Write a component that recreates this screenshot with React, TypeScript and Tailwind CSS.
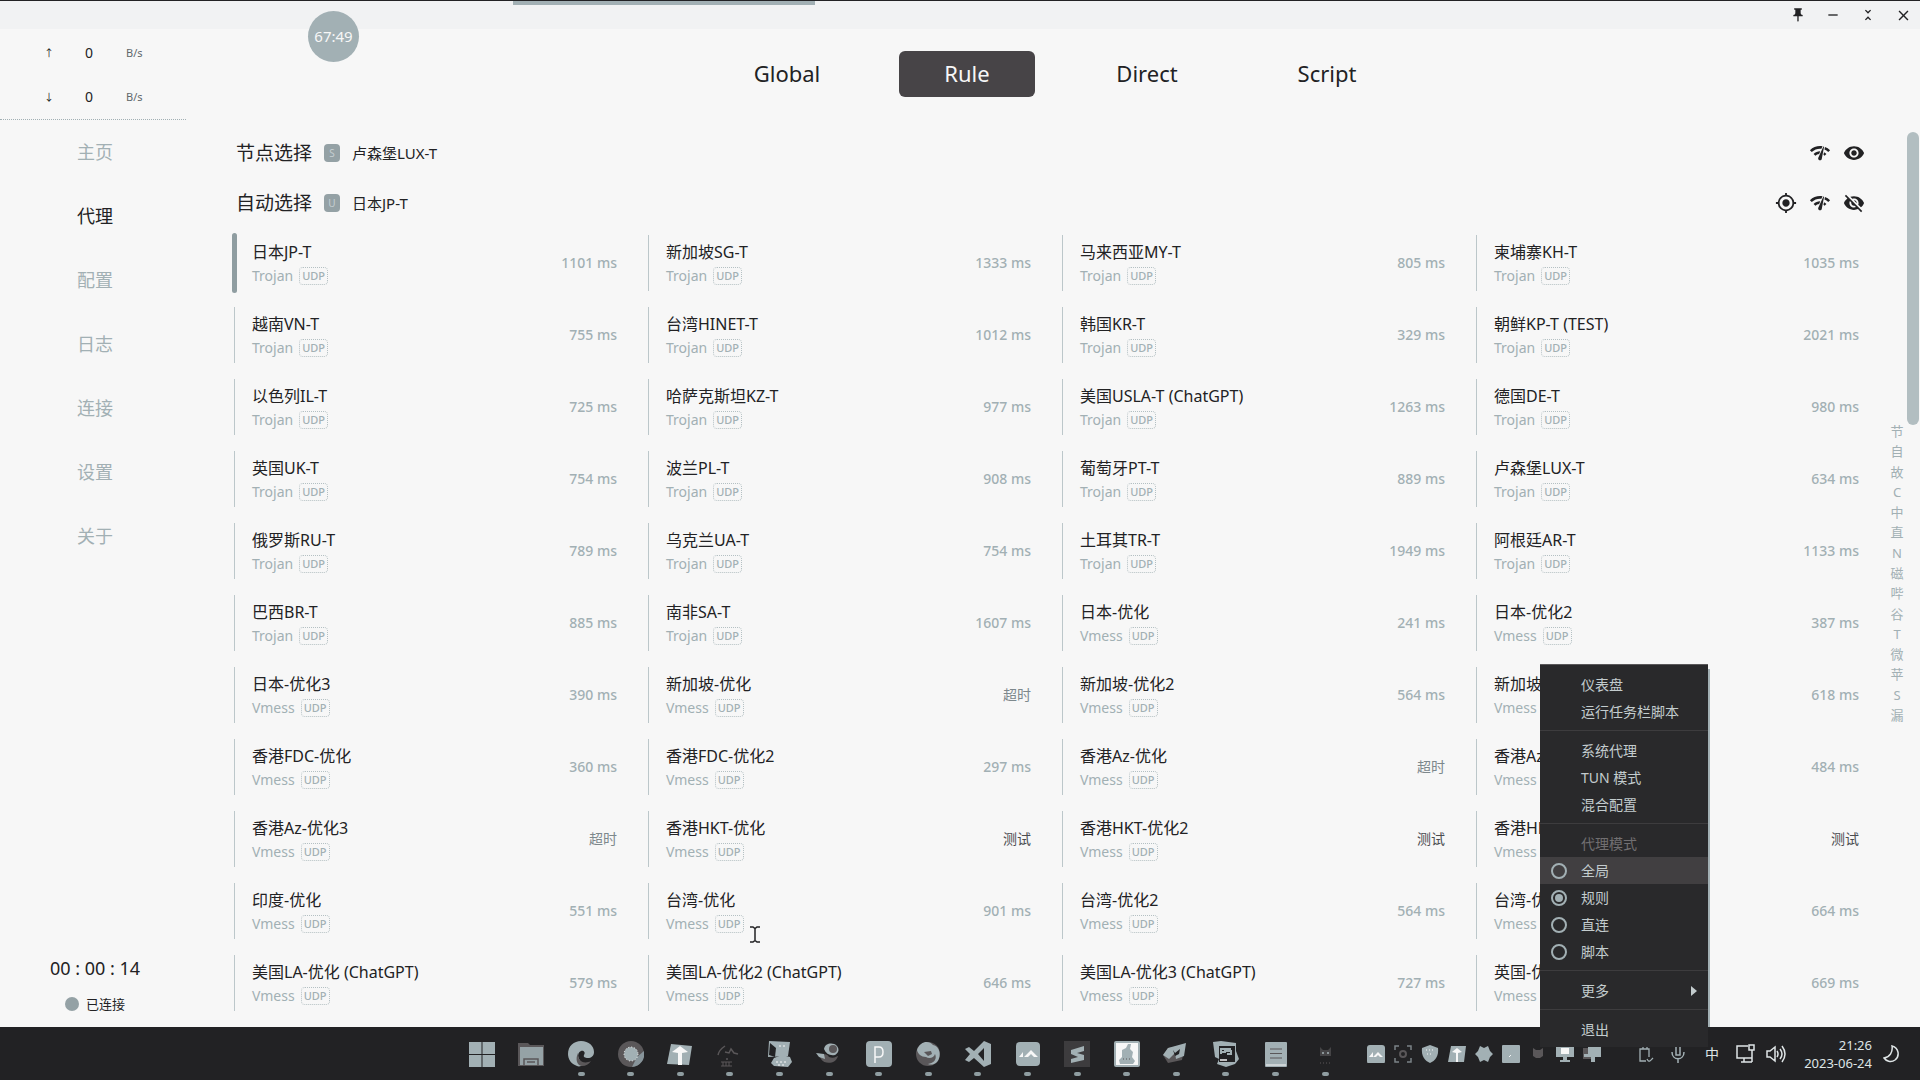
import React from "react";
import { MdClose, MdMyLocation, MdNetworkCheck, MdPushPin, MdRemove, MdUnfoldLess, MdVisibility, MdVisibilityOff } from "react-icons/md";

type Node = { name: string; protocol: "Trojan" | "Vmess"; delay: string };

const rows: [string, string][][] = [
  [["日本JP-T", "1101 ms"], ["新加坡SG-T", "1333 ms"], ["马来西亚MY-T", "805 ms"], ["柬埔寨KH-T", "1035 ms"]],
  [["越南VN-T", "755 ms"], ["台湾HINET-T", "1012 ms"], ["韩国KR-T", "329 ms"], ["朝鲜KP-T (TEST)", "2021 ms"]],
  [["以色列IL-T", "725 ms"], ["哈萨克斯坦KZ-T", "977 ms"], ["美国USLA-T (ChatGPT)", "1263 ms"], ["德国DE-T", "980 ms"]],
  [["英国UK-T", "754 ms"], ["波兰PL-T", "908 ms"], ["葡萄牙PT-T", "889 ms"], ["卢森堡LUX-T", "634 ms"]],
  [["俄罗斯RU-T", "789 ms"], ["乌克兰UA-T", "754 ms"], ["土耳其TR-T", "1949 ms"], ["阿根廷AR-T", "1133 ms"]],
  [["巴西BR-T", "885 ms"], ["南非SA-T", "1607 ms"], ["日本-优化", "241 ms"], ["日本-优化2", "387 ms"]],
  [["日本-优化3", "390 ms"], ["新加坡-优化", "超时"], ["新加坡-优化2", "564 ms"], ["新加坡-优化3", "618 ms"]],
  [["香港FDC-优化", "360 ms"], ["香港FDC-优化2", "297 ms"], ["香港Az-优化", "超时"], ["香港Az-优化2", "484 ms"]],
  [["香港Az-优化3", "超时"], ["香港HKT-优化", "测试"], ["香港HKT-优化2", "测试"], ["香港HKT-优化3", "测试"]],
  [["印度-优化", "551 ms"], ["台湾-优化", "901 ms"], ["台湾-优化2", "564 ms"], ["台湾-优化3", "664 ms"]],
  [["美国LA-优化 (ChatGPT)", "579 ms"], ["美国LA-优化2 (ChatGPT)", "646 ms"], ["美国LA-优化3 (ChatGPT)", "727 ms"], ["英国-优化", "669 ms"]],
];

const nodes: Node[] = rows.flat().map(([name, delay]) => ({ name, delay, protocol: name.includes("优化") ? "Vmess" : "Trojan" }));

function delayColor(delay: string) {
  if (delay === "测试") return "text-[#4a4c50]";
  if (delay === "超时") return "text-[#7d888c]";
  return "font-medium text-[#a2b0b4]";
}

function NodeCard({ node, active }: { node: Node; active: boolean }) {
  return (
    <button type="button" className="flex h-[60px] items-center text-left">
      <span className={active ? "h-full w-[5px] rounded-sm bg-[#8f9da1]" : "ml-0.5 mr-0.5 h-[56px] w-px bg-[#bcc7ca]"} />
      <span className="ml-[15px] flex flex-1 flex-col pt-0.5">
        <span className="text-base leading-6">{node.name}</span>
        <span className="flex items-center gap-1.5 text-sm leading-6 text-[#a2b0b4]">
          {node.protocol}
          <span className="rounded border border-dotted border-[#b4c0c3] px-0.5 text-[11px] font-medium leading-4">UDP</span>
        </span>
      </span>
      <span className={`mr-[17px] text-sm ${delayColor(node.delay)}`}>{node.delay}</span>
    </button>
  );
}

function Group({ title, badge, current, children }: { title: string; badge: string; current: string; children: React.ReactNode }) {
  return (
    <header className="flex h-[50px] items-center pl-1">
      <h2 className="text-[19px]">{title}</h2>
      <span className="ml-3 flex h-[18px] w-4 items-center justify-center rounded bg-[#94a1a5] text-[10px] text-[#c6cfd2]">{badge}</span>
      <span className="ml-3 text-[15px]">{current}</span>
      <span className="ml-auto mr-[11px] flex gap-3 text-[22px]">{children}</span>
    </header>
  );
}

function Item({ children, dim }: { children: React.ReactNode; dim?: boolean }) {
  return (
    <button type="button" disabled={dim} className={`flex h-[27px] w-full items-center justify-between pl-[41px] pr-[11px] text-sm ${dim ? "text-[#716f71]" : "text-[#c3ccce]"}`}>
      {children}
    </button>
  );
}

function Mode({ label, checked, hover }: { label: string; checked?: boolean; hover?: boolean }) {
  return (
    <label className={`flex h-[27px] items-center gap-[14px] pl-[11px] text-sm text-[#c3ccce] ${hover ? "bg-[#413f41]" : ""}`}>
      <input
        type="radio"
        name="mode"
        defaultChecked={checked}
        className="size-4 appearance-none rounded-full border-2 border-[#a2b0b4] p-0.5 checked:bg-[#a2b0b4] checked:bg-clip-content"
      />
      {label}
    </label>
  );
}

const Sep = () => <hr className="my-[5px] h-0.5 border-0 border-t border-[#3d3c3e] pt-px" />;

function ContextMenu() {
  return (
    <div role="menu" className="absolute bottom-[33px] right-[212px] w-[168px] border-t border-[#5a585a] bg-[#29292b] pb-1 pt-1.5">
      <span className="absolute -right-0.5 bottom-5 top-1 w-0.5 bg-[#a2b0b4]" />
      <Item>仪表盘</Item>
      <Item>运行任务栏脚本</Item>
      <Sep />
      <Item>系统代理</Item>
      <Item>TUN 模式</Item>
      <Item>混合配置</Item>
      <Sep />
      <Item dim>代理模式</Item>
      <Mode label="全局" hover />
      <Mode label="规则" checked />
      <Mode label="直连" />
      <Mode label="脚本" />
      <Sep />
      <Item>
        更多
        <svg width="6" height="10" viewBox="0 0 6 10" fill="currentColor"><path d="M0 0 6 5 0 10z" /></svg>
      </Item>
      <Sep />
      <Item>退出</Item>
    </div>
  );
}

const G = "#a2b0b4";
const D = "#5a5759";
const K = "#222224";
const W = "#f7f7f7";

const apps: { label: string; art: React.ReactNode }[] = [
  { label: "开始", art: <path fill={G} d="M0 1h12.500v12H0zM13.500 1H26v12H13.500zM0 14h12.500v12H0zM13.500 14H26v12H13.500z" /> },
  { label: "文件资源管理器", art: <><path fill={D} d="M0 2h10l2 2h14v21H0z" /><path fill="#95a2a6" d="M2 6h23v18H2z" /><path fill="none" stroke={D} strokeWidth="1.500" d="M6 24v-6h14v6M9 21h8" /></> },
  { label: "Edge", art: <><path fill={G} d="M0 13C0 5 6 0 13 0c8 0 13 5 13 11 0 4-3 6-6 6s-5-1-4-3c2-3-1-5-3-4-5 2-3 10 3 13-2 2-5 3-7 2C3 23 0 18 0 13z" /><path fill={D} d="M10 12c-1 7 5 12 13 8-3 5-9 6-12 4-3-3-3-8-1-12z" /></> },
  { label: "Chrome", art: <><circle cx="13" cy="13" r="13" fill={D} /><path fill="#87949a" d="M26 10a13 13 0 0 1-12 16l5-10z" /><circle cx="13" cy="13" r="7" fill={G} stroke={W} strokeDasharray="1 2" /></> },
  { label: "Typora", art: <><path fill={G} d="M4 3l21 2-3 19-22-1z" /><path fill={W} d="M5 11l8-6 8 6-6 1v12h-4V12z" /></> },
  { label: "HN", art: <><path fill="none" stroke={D} strokeWidth="1.500" d="M1 14c1-5 4-7 7-9M8 11l4 1 2-4 3 4 4 1M9 18h2" /><path fill="none" stroke={D} d="M4 21h11M4 25h11M6 21v4M9 21v4M12 21v4" /></> },
  { label: "远程桌面", art: <><path fill={G} d="M3 0l21 1-2 14-20 1z" /><path fill={K} d="M4 2l6 5-1 9-6-2z" /><path fill={G} d="M8 17l8-3 8 2 2 5-4 5-14-1-3-3z" /><path stroke={W} strokeDasharray="2 2" d="M13 5h7M10 21h12M12 24h8" /></> },
  { label: "Navicat", art: <><path fill={D} d="M2 12c5 3 8-1 11 4 5 2 8-1 9-1-2 8-13 9-17 3z" /><path fill={G} d="M8 8C9 2 17 1 21 5c3 4 1 7-2 9-5 1-9-1-11-6z" /><circle cx="17" cy="8" r="4" fill={D} /><path fill={G} d="M0 12l8 1 1 5-6-2z" /></> },
  { label: "PDF", art: <><rect width="26" height="26" rx="4" fill={G} /><path fill="none" stroke={W} strokeWidth="1.500" d="M9 22V6h4q4 0 4 5t-4 5H9" /></> },
  { label: "Firefox", art: <><circle cx="13" cy="13" r="12" fill={D} /><path fill={G} d="M2 9C5 0 14-1 18 4c8 2 8 12 4 17-3 3-7 3-9 2 7-1 9-6 7-10-1 4-6 5-9 3-5 0-8-3-9-7z" /><path fill={D} d="M9 11l7-1 1 3-4 2z" /></> },
  { label: "VS Code", art: <path fill={G} d="M19 0l7 3v20l-7 3-10-9-5 4-4-2 5-6-5-5 4-2 5 4zM19 7l-6 6 6 7z" fillRule="evenodd" /> },
  { label: "监控", art: <><rect x="1" y="1" width="24" height="24" rx="4" fill={G} /><path fill={W} d="M4 16l4-5v5zM9 16l7-7 7 7h-4l-3-3-3 3z" /></> },
  { label: "Sublime Text", art: <><rect width="26" height="26" fill="#3d3c3e" /><path fill={G} d="M20 5v5l-7 2 7 2v5L7 22v-4l7-2-7-3V9z" /></> },
  { label: "Java", art: <><rect width="26" height="26" rx="2" fill={G} /><rect x="2" y="2" width="22" height="22" fill={W} /><path fill={G} d="M14 3h3l-1 5 3 3-1 5 3 4-2 3H6l-1-4 3-3V9l4-2z" /><path stroke={D} strokeDasharray="1 2" d="M9 18h8" /></> },
  { label: "VMware", art: <><path fill={D} d="M0 14L5 7l17-3-3 15-14 3z" /><path fill={G} d="M5 7l18-5-2 13-8 3-1-6-6 6-6-4z" /><path fill={K} d="M10 9l2 3 5-4-1 5-4 2z" /></> },
  { label: "PhpStorm", art: <><path fill={G} d="M0 1l8-1 15 2v8l3 8-4 5-9 3-9-3 2-5-4-2z" /><rect x="6" y="5" width="16" height="16" fill={K} /><path stroke={G} strokeWidth="2" fill="none" d="M8 13V8h4v3H8M18 8h-4v2h4v3h-4" /><path stroke={W} strokeWidth="1.500" d="M7 19h7" /></> },
  { label: "记事本", art: <><rect x="2" y="1" width="22" height="25" rx="1" fill={G} /><path stroke={D} strokeWidth="1.200" d="M7 8h12M7 12.500h12M7 17h12" /><path stroke={W} d="M3 24h20" /></> },
  { label: "Clash", art: <><path fill="#454446" d="M8 6l3 3h5l3-3v9H8z" /><path stroke={G} strokeWidth="1.500" d="M10 12h2M15 12h2" /><path stroke={D} strokeDasharray="1 2" d="M8 22h12" /></> },
];

const tray: { label: string; art: React.ReactNode }[] = [
  { label: "监控", art: <><rect width="18" height="19" rx="3" fill={G} /><path fill={W} d="M2 12l4-5v5zM6 12l5-5 5 5h-3l-2-2-2 2z" /></> },
  { label: "截图", art: <><path fill="none" stroke="#7b8386" strokeWidth="1.500" d="M1 5V1h4M13 1h4v4M17 13v4h-4M5 17H1v-4" /><circle cx="9" cy="9" r="3" fill="none" stroke={D} strokeWidth="2" /></> },
  { label: "安全", art: <><path fill={G} d="M9 0l8 3c1 8-3 13-8 15C4 16 0 11 1 3z" /><path stroke={W} strokeDasharray="1 2" d="M5 5h8M6 9h6" /></> },
  { label: "Typora", art: <><path fill={G} d="M3 1h15l-2 16H0z" /><path fill={W} d="M4 7l5-4 5 4-4 1v9H8V8z" /></> },
  { label: "组件", art: <path fill={G} d="M5 1l4 2 4-2 2 5 3 3-3 3-2 5-4-2-4 2-2-5-3-3 3-3z" /> },
  { label: "便笺", art: <><rect width="18" height="18" rx="1" fill={G} /><path stroke={W} d="M7 12l2-2" /></> },
  { label: "Clash", art: <path fill={D} d="M4 3l3 2h4l3-2v8l-3 2H7l-3-2z" /> },
  { label: "显示器", art: <><path fill={G} d="M0 1h18v11H0zM7 12h4v3h3v2H4v-2h3z" /><path fill={W} d="M5 3h8v6H5z" /></> },
  { label: "远程", art: <><path fill={D} d="M0 3h12v11H0z" /><path fill={G} d="M5 1h13v11h-6v5H8v-5H1V9h4z" /></> },
];

export default function App() {
  const side = ["主页", "代理", "配置", "日志", "连接", "设置", "关于"];
  return (
    <div className="relative flex min-h-screen flex-col bg-[#f7f7f7] font-['Noto_Sans','Noto_Sans_CJK_SC',sans-serif] text-[#222224]">
      <div className="absolute left-[308px] top-[11px] flex size-[51px] items-center justify-center rounded-full bg-[#a2b0b4] text-[15px] text-[#f7f7f7]">67:49</div>
      <div className="absolute left-[513px] top-px h-1 w-[302px] bg-[#a2b0b4]" />
      <svg className="absolute left-[749px] top-[926px]" width="12" height="17" viewBox="0 0 12 17" fill="none" stroke="#222224" strokeWidth="1.500"><path d="M1 1h3l2 1.500L8 1h3M6 2v13M1 16h3l2-1.500L8 16h3" /></svg>

      <div className="flex h-[29px] items-center justify-end gap-[19px] border-t border-[#222224] bg-[#f1f2f3] pr-2">
        <button type="button" aria-label="置顶"><MdPushPin size={16} /></button>
        <button type="button" aria-label="最小化"><MdRemove size={16} /></button>
        <button type="button" aria-label="还原"><MdUnfoldLess size={16} /></button>
        <button type="button" aria-label="关闭"><MdClose size={17} /></button>
      </div>

      <div className="flex flex-1">
        <aside className="flex w-[186px] shrink-0 flex-col">
          <div className="border-b border-dotted border-[#a2b0b4] pt-0.5 text-sm">
            {["↑", "↓"].map((arrow) => (
              <div key={arrow} className="flex h-11 items-center">
                <span className="ml-[42px] w-3.5 text-center text-[10px]">{arrow}</span>
                <span className="ml-6 w-[18px] text-center">0</span>
                <span className="ml-7 text-[11px] text-[#5f686b]">B/s</span>
              </div>
            ))}
          </div>
          <nav className="flex flex-col">
            {side.map((s) => (
              <a key={s} href="#" className={`flex h-16 items-center justify-center pl-1 text-lg ${s === "代理" ? "" : "text-[#a2b0b4]"}`}>{s}</a>
            ))}
          </nav>
          <div className="mt-auto pb-[11px] pl-1 text-center">
            <div className="text-lg leading-6">00 : 00 : 14</div>
            <div className="mt-3 flex items-center justify-center gap-[7px] text-[13px] leading-6">
              <span className="size-3.5 rounded-full bg-[#94a1a5]" />
              已连接
            </div>
          </div>
        </aside>

        <main className="flex flex-1 flex-col">
          <div className="flex justify-center gap-11 pl-2 pt-[22px]">
            {["Global", "Rule", "Direct", "Script"].map((t) => (
              <button key={t} type="button" className={`h-[46px] w-[136px] rounded-md pb-0.5 text-[22px] ${t === "Rule" ? "bg-[#474447] text-[#f7f7f7]" : ""}`}>{t}</button>
            ))}
          </div>
          <div className="flex flex-1">
            <div className="flex-1 pl-[46px] pt-[31px]">
              <Group title="节点选择" badge="S" current="卢森堡LUX-T">
                <button type="button" aria-label="测速"><MdNetworkCheck /></button>
                <button type="button" aria-label="显示"><MdVisibility /></button>
              </Group>
              <Group title="自动选择" badge="U" current="日本JP-T">
                <button type="button" aria-label="定位"><MdMyLocation /></button>
                <button type="button" aria-label="测速"><MdNetworkCheck /></button>
                <button type="button" aria-label="隐藏"><MdVisibilityOff /></button>
              </Group>
              <div className="grid grid-cols-4 gap-3 pb-3 pt-[5px]">
                {nodes.map((n, i) => <NodeCard key={n.name} node={n} active={i === 0} />)}
              </div>
            </div>
            <nav className="mt-[324px] flex h-[304px] w-[31px] flex-col items-end justify-between pr-[3px] text-[13px] leading-5 text-[#a2b0b4]">
              {Array.from("节自故C中直N磁哔谷T微苹S漏").map((c) => (
                <a key={c} href="#" className="w-[14px] text-center">{c}</a>
              ))}
            </nav>
            <div className="mr-px mt-[35px] h-[293px] w-3 rounded-full bg-[#b2bec1]" />
          </div>
        </main>
      </div>

      <footer className="flex h-[53px] items-center bg-[#222224] pl-[457px] pr-5 text-[#dfe5e6]">
        <div className="flex w-[893px]">
          {apps.map((a, i) => (
            <button key={a.label} type="button" aria-label={a.label} className="flex flex-1 flex-col items-center pt-[10px]">
              <svg width="26" height="26" viewBox="0 0 26 26">{a.art}</svg>
              <span className={`mt-[5px] h-1 w-[7px] rounded-full ${i > 1 ? "bg-[#8f9da1]" : ""}`} />
            </button>
          ))}
        </div>
        <div className="ml-auto mr-[25px] flex">
          {tray.map((t) => (
            <button key={t.label} type="button" aria-label={t.label} className="flex w-[27px] justify-center">
              <svg width="18" height="18" viewBox="0 0 18 18">{t.art}</svg>
            </button>
          ))}
        </div>
        <button type="button" aria-label="剪贴板" className="flex w-8 justify-center text-[#a2b0b4]">
          <svg width="16" height="18" viewBox="0 0 16 18" fill="none" stroke="currentColor" strokeWidth="1.300"><path d="M8 16H2V4h9v8M5 4V1h4v3M9 14c2 4 3 2 6-1" /></svg>
        </button>
        <button type="button" aria-label="麦克风" className="flex w-8 justify-center text-[#a2b0b4]">
          <svg width="14" height="18" viewBox="0 0 14 18" fill="none" stroke="currentColor" strokeWidth="1.500"><path d="M5 1h4v9H5zM1 7c0 9 12 9 12 0M7 14v4" /></svg>
        </button>
        <button type="button" className="w-9 text-sm">中</button>
        <button type="button" aria-label="网络" className="flex w-8 justify-center">
          <svg width="20" height="20" viewBox="0 0 20 20" fill="none" stroke="currentColor" strokeWidth="1.500"><path d="M12 2H1v12h15V8M5 18h11M8 14v4M13 1h5v5h-5zM16 6v12" /></svg>
        </button>
        <button type="button" aria-label="音量" className="flex w-7 justify-center">
          <svg width="20" height="18" viewBox="0 0 20 18" fill="none" stroke="currentColor" strokeWidth="1.500"><path d="M1 6h3l5-4v14l-5-4H1zM11 6q2 3 0 6M14 4q4 5 0 10M16 1q6 8 0 16" /></svg>
        </button>
        <div className="w-[82px] text-right text-[13px] leading-[18px]">
          <div>21:26</div>
          <div>2023-06-24</div>
        </div>
        <button type="button" aria-label="通知" className="ml-[11px]">
          <svg width="17" height="18" viewBox="0 0 17 18" fill="none" stroke="currentColor" strokeWidth="1.500"><path d="M9 1c7 2 8 10 3 14-4 3-9 1-11-2 6-1 9-6 8-12z" /></svg>
        </button>
      </footer>
      <ContextMenu />
    </div>
  );
}
